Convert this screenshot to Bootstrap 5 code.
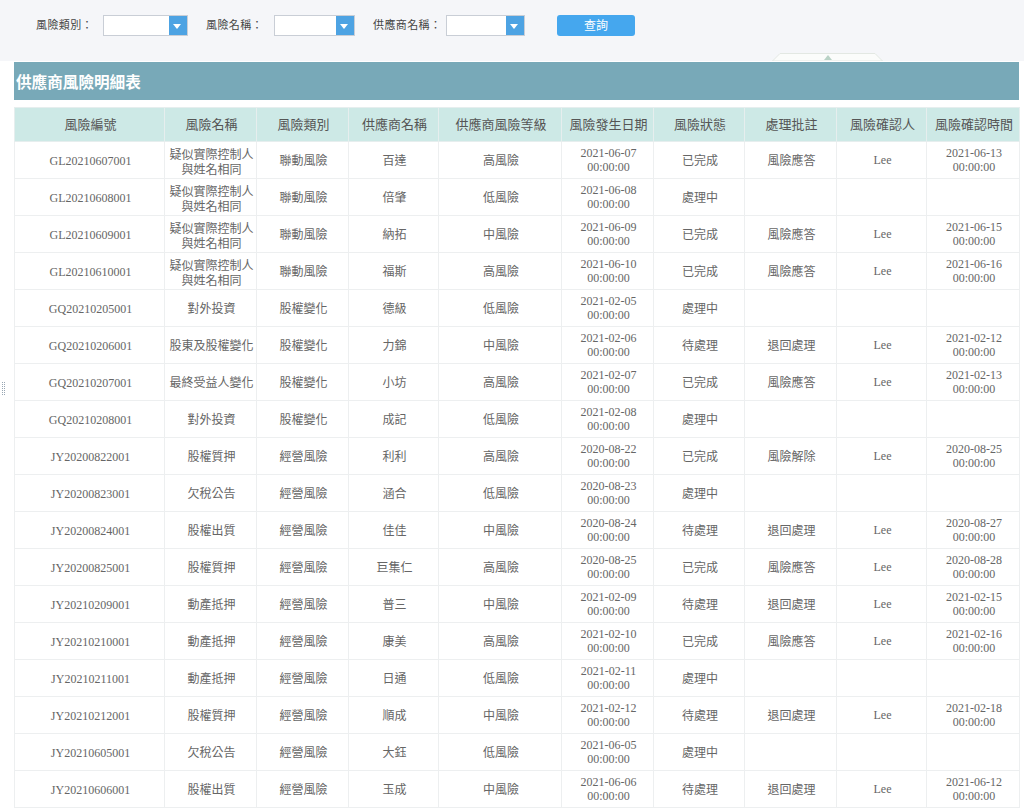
<!DOCTYPE html>
<html lang="zh-Hant"><head><meta charset="utf-8"><title>供應商風險明細表</title>
<link rel="stylesheet" href="https://cdn.jsdelivr.net/npm/bootstrap@5.3.0/dist/css/bootstrap.min.css">
<style>
html,body{height:100%;overflow:hidden;background:#fff}
body{font-family:"Liberation Serif","Noto Sans CJK TC",serif;position:relative}
.topbar{height:61px;background:#f5f6f9;padding:15px 0 0 36px;color:#444}
.flabel{width:67px;line-height:21px;font-size:11px;letter-spacing:.4px;white-space:nowrap}
.f2{width:68px}.f3{width:73px}
.combo{height:21px;background:#fff;border:1px solid #c9ced6;position:relative}
.combo i{position:absolute;right:0;top:0;bottom:0;width:18px;background:#4da3e3}
.combo i::after{content:"";position:absolute;left:4px;top:8px;border:4.5px solid transparent;border-top:5px solid #fff;border-bottom:0}
.c1{width:85px;margin-right:18px}.c2{width:81px;margin-right:18px}.c3{width:79px;margin-right:32px}
.qbtn{width:78px;height:21px;padding:0;line-height:20px;font-size:12px;background:#45a7ee;border:0;border-radius:3px;color:#fff}
.collapse-tab{position:absolute;left:772px;top:53px;width:111px;height:8px;display:block}
.grip{position:absolute;left:1px;top:382px;width:5px;height:13px;background-image:conic-gradient(#98a6b3 25%,transparent 0);background-size:2px 2px}
.sheet{margin:1px 5px 0 14px}
.sheet-title{height:38px;background:#78a9b8;color:#fff;font-size:15.6px;font-weight:700;line-height:41px;padding-left:2px;margin-bottom:7px}
.risk{table-layout:fixed;width:1005px;margin:0;border-collapse:collapse;color:#666;font-size:12px;line-height:14px;text-align:center}
.risk th{height:34px;background:#cde9e6;color:#555;font-size:13px;font-weight:400;padding:0 0 0 2px;border:1px solid #e6eeee;vertical-align:middle}
.risk td{height:37px;padding:1px 1px 0 3px;border:1px solid #edeff0;vertical-align:middle;color:#666;background:#fff}
.risk td:nth-child(6),.risk td:nth-child(9),.risk td:nth-child(10){padding-top:0}
.risk td:nth-child(2){line-height:15px;padding-top:2px}
.risk tbody tr:nth-child(-n+4) td:nth-child(2){padding-top:5px}
</style></head><body>
<div class="topbar d-flex align-items-start">
<span class="flabel">風險類別：</span><span class="combo c1"><i></i></span>
<span class="flabel f2">風險名稱：</span><span class="combo c2"><i></i></span>
<span class="flabel f3">供應商名稱：</span><span class="combo c3"><i></i></span>
<button type="button" class="btn qbtn">查詢</button>
</div>
<svg class="collapse-tab" viewBox="0 0 111 8"><polygon points="0.5,8 8,0.5 103,0.5 110.5,8" fill="#fbfcfb" stroke="#e3e8e3"/><polygon points="52,7 56,2 60,7" fill="#b9d2c6"/></svg>
<div class="grip"></div>
<div class="sheet">
<div class="sheet-title">供應商風險明細表</div>
<table class="table risk"><colgroup><col style="width:150px"><col style="width:92px"><col style="width:92px"><col style="width:90px"><col style="width:123px"><col style="width:92px"><col style="width:91px"><col style="width:92px"><col style="width:90px"><col style="width:93px"></colgroup>
<thead><tr><th>風險編號</th><th>風險名稱</th><th>風險類別</th><th>供應商名稱</th><th>供應商風險等級</th><th>風險發生日期</th><th>風險狀態</th><th>處理批註</th><th>風險確認人</th><th>風險確認時間</th></tr></thead>
<tbody>
<tr><td>GL20210607001</td><td>疑似實際控制人<br>與姓名相同</td><td>聯動風險</td><td>百達</td><td>高風險</td><td>2021-06-07<br>00:00:00</td><td>已完成</td><td>風險應答</td><td>Lee</td><td>2021-06-13<br>00:00:00</td></tr>
<tr><td>GL20210608001</td><td>疑似實際控制人<br>與姓名相同</td><td>聯動風險</td><td>倍肇</td><td>低風險</td><td>2021-06-08<br>00:00:00</td><td>處理中</td><td></td><td></td><td></td></tr>
<tr><td>GL20210609001</td><td>疑似實際控制人<br>與姓名相同</td><td>聯動風險</td><td>納拓</td><td>中風險</td><td>2021-06-09<br>00:00:00</td><td>已完成</td><td>風險應答</td><td>Lee</td><td>2021-06-15<br>00:00:00</td></tr>
<tr><td>GL20210610001</td><td>疑似實際控制人<br>與姓名相同</td><td>聯動風險</td><td>福斯</td><td>高風險</td><td>2021-06-10<br>00:00:00</td><td>已完成</td><td>風險應答</td><td>Lee</td><td>2021-06-16<br>00:00:00</td></tr>
<tr><td>GQ20210205001</td><td>對外投資</td><td>股權變化</td><td>德級</td><td>低風險</td><td>2021-02-05<br>00:00:00</td><td>處理中</td><td></td><td></td><td></td></tr>
<tr><td>GQ20210206001</td><td>股東及股權變化</td><td>股權變化</td><td>力錦</td><td>中風險</td><td>2021-02-06<br>00:00:00</td><td>待處理</td><td>退回處理</td><td>Lee</td><td>2021-02-12<br>00:00:00</td></tr>
<tr><td>GQ20210207001</td><td>最終受益人變化</td><td>股權變化</td><td>小坊</td><td>高風險</td><td>2021-02-07<br>00:00:00</td><td>已完成</td><td>風險應答</td><td>Lee</td><td>2021-02-13<br>00:00:00</td></tr>
<tr><td>GQ20210208001</td><td>對外投資</td><td>股權變化</td><td>成記</td><td>低風險</td><td>2021-02-08<br>00:00:00</td><td>處理中</td><td></td><td></td><td></td></tr>
<tr><td>JY20200822001</td><td>股權質押</td><td>經營風險</td><td>利利</td><td>高風險</td><td>2020-08-22<br>00:00:00</td><td>已完成</td><td>風險解除</td><td>Lee</td><td>2020-08-25<br>00:00:00</td></tr>
<tr><td>JY20200823001</td><td>欠稅公告</td><td>經營風險</td><td>涵合</td><td>低風險</td><td>2020-08-23<br>00:00:00</td><td>處理中</td><td></td><td></td><td></td></tr>
<tr><td>JY20200824001</td><td>股權出質</td><td>經營風險</td><td>佳佳</td><td>中風險</td><td>2020-08-24<br>00:00:00</td><td>待處理</td><td>退回處理</td><td>Lee</td><td>2020-08-27<br>00:00:00</td></tr>
<tr><td>JY20200825001</td><td>股權質押</td><td>經營風險</td><td>巨集仁</td><td>高風險</td><td>2020-08-25<br>00:00:00</td><td>已完成</td><td>風險應答</td><td>Lee</td><td>2020-08-28<br>00:00:00</td></tr>
<tr><td>JY20210209001</td><td>動產抵押</td><td>經營風險</td><td>普三</td><td>中風險</td><td>2021-02-09<br>00:00:00</td><td>待處理</td><td>退回處理</td><td>Lee</td><td>2021-02-15<br>00:00:00</td></tr>
<tr><td>JY20210210001</td><td>動產抵押</td><td>經營風險</td><td>康美</td><td>高風險</td><td>2021-02-10<br>00:00:00</td><td>已完成</td><td>風險應答</td><td>Lee</td><td>2021-02-16<br>00:00:00</td></tr>
<tr><td>JY20210211001</td><td>動產抵押</td><td>經營風險</td><td>日通</td><td>低風險</td><td>2021-02-11<br>00:00:00</td><td>處理中</td><td></td><td></td><td></td></tr>
<tr><td>JY20210212001</td><td>股權質押</td><td>經營風險</td><td>順成</td><td>中風險</td><td>2021-02-12<br>00:00:00</td><td>待處理</td><td>退回處理</td><td>Lee</td><td>2021-02-18<br>00:00:00</td></tr>
<tr><td>JY20210605001</td><td>欠稅公告</td><td>經營風險</td><td>大鈺</td><td>低風險</td><td>2021-06-05<br>00:00:00</td><td>處理中</td><td></td><td></td><td></td></tr>
<tr><td>JY20210606001</td><td>股權出質</td><td>經營風險</td><td>玉成</td><td>中風險</td><td>2021-06-06<br>00:00:00</td><td>待處理</td><td>退回處理</td><td>Lee</td><td>2021-06-12<br>00:00:00</td></tr>
</tbody></table>
</div>
<script src="https://cdn.jsdelivr.net/npm/bootstrap@5.3.0/dist/js/bootstrap.bundle.min.js"></script>
</body></html>
